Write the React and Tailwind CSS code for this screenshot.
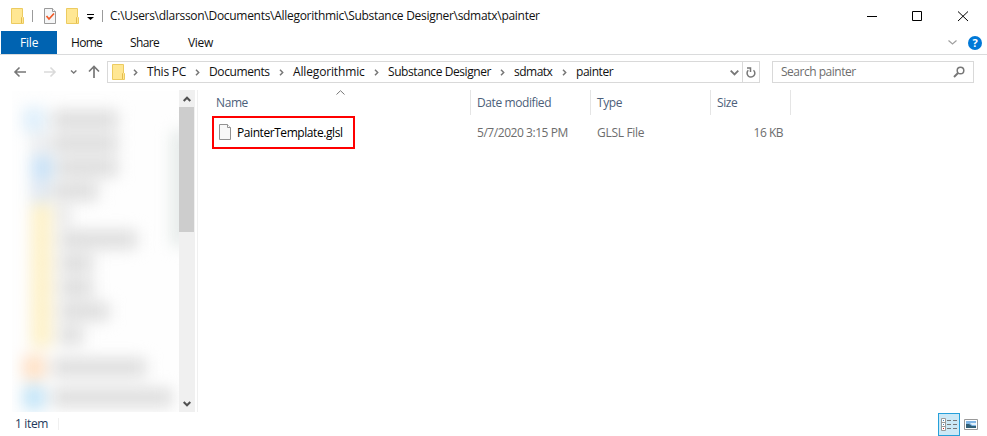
import React from "react";

const Folder = ({ className = "" }) => (
  <svg width="13" height="16" viewBox="0 0 13 16" className={className}>
    <path d="M.5.5h11v8l1 1v6H.5z" fill="#ffe793" stroke="#eccb60" />
    <path d="M10.5 15V9.5l1-1" fill="none" stroke="#e3bb4c" />
  </svg>
);

const Crumb = ({ children, className }) => (
  <>
    <svg width="5" height="7" viewBox="0 0 5 7" className="shrink-0">
      <path d="M1 .7 3.7 3.5 1 6.3" fill="none" stroke="#777" strokeWidth="1.5" />
    </svg>
    <span className={`ml-[9px] shrink-0 ${className}`}>{children}</span>
  </>
);

function TitleBar() {
  return (
    <div className="flex h-[31px] items-center">
      <Folder className="ml-[11px]" />
      <div className="ml-2 h-3 w-px bg-[#9b9b9b]" />
      <svg width="12" height="16" viewBox="0 0 12 16" className="ml-[11px]">
        <path d="M.5.5h8l3 3v12H.5z" fill="#f5f6f7" stroke="#9a9a9a" />
        <path d="M8.5.5v3h3" fill="#fff" stroke="#9a9a9a" />
        <path d="m2.5 8 2.5 3 5-5.5" fill="none" stroke="#f05a28" strokeWidth="1.7" />
      </svg>
      <Folder className="ml-[10px]" />
      <svg width="7" height="6" viewBox="0 0 7 6" className="ml-2 mt-0.5">
        <path d="M0 0h7v1H0zM0 3h7L3.5 6z" fill="#000" />
      </svg>
      <div className="ml-2 h-3 w-px bg-[#9b9b9b]" />
      <span className="ml-[7px] w-[758px] pt-px tracking-[-0.29px]">
        C:\Users\dlarsson\Documents\Allegorithmic\Substance Designer\sdmatx\painter
      </span>
      <svg width="103" height="12" viewBox="0 0 103 12" className="-ml-[1px] shrink-0" fill="none" stroke="#000">
        <path d="M0 6.5h10M45.5 1.5h9v9h-9zM91 1.5l10 9.5M101 1.5 91 11" />
      </svg>
    </div>
  );
}

function Ribbon() {
  return (
    <div className="flex h-6 items-center border-b border-[#dadbdc]">
      <div className="ml-px flex h-[23px] w-14 items-center bg-[#0063b1] pl-[19px] pt-px text-white tracking-[-0.2px]">File</div>
      <span className="ml-[14px] w-[59px] pt-px tracking-[-0.7px]">Home</span>
      <span className="w-[58px] pt-px tracking-[-0.6px]">Share</span>
      <span className="grow pt-px tracking-[-0.3px]">View</span>
      <svg width="9" height="5" viewBox="0 0 9 5" className="mr-[11px]">
        <path d="m.5.5 4 3.5 4-3.5" fill="none" stroke="#a0a0a0" strokeWidth="1.2" />
      </svg>
      <div className="mr-[5px] flex size-[14px] items-center justify-center rounded-full bg-[#0078d7] text-[11px] font-bold text-white">?</div>
    </div>
  );
}

function AddressBar() {
  return (
    <div className="flex h-[35px] items-start pt-[6px]">
      <svg width="106" height="22" viewBox="0 0 106 22" className="mr-px shrink-0" fill="none">
        <path d="M26 11H15M19.5 6.5 15 11l4.5 4.5" stroke="#777" strokeWidth="1.6" />
        <path d="M44 11h11M50.5 6.5 55 11l-4.5 4.5" stroke="#dadada" strokeWidth="1.6" />
        <path d="m71 9.5 2.7 2.5 2.7-2.5" stroke="#777" strokeWidth="1.4" />
        <path d="M94 17V6M89 10.5 94 5.5l5 5" stroke="#777" strokeWidth="1.7" />
      </svg>
      <div className="flex h-[22px] w-[653px] shrink-0 items-center border border-[#d9d9d9]">
        <Folder className="ml-1 mr-2" />
        <div className="flex grow items-center">
          <Crumb className="w-[48px] tracking-[-0.2px]">This PC</Crumb>
          <Crumb className="w-[70px] tracking-[-0.4px]">Documents</Crumb>
          <Crumb className="w-[81px] tracking-[-0.15px]">Allegorithmic</Crumb>
          <Crumb className="w-[112px] tracking-[-0.42px]">Substance Designer</Crumb>
          <Crumb className="w-[48px] tracking-[-0.5px]">sdmatx</Crumb>
          <Crumb className="tracking-[-0.45px]">painter</Crumb>
        </div>
        <svg width="9" height="6" viewBox="0 0 9 6" className="mr-[3px] mt-px shrink-0">
          <path d="m.7.7 3.8 3.8L8.3.7" fill="none" stroke="#777" strokeWidth="1.8" />
        </svg>
        <div className="flex h-full w-[17px] shrink-0 items-center justify-center border-l border-[#d9d9d9]">
          <svg width="10" height="11" viewBox="0 0 10 11" fill="none" stroke="#777" strokeWidth="1.5">
            <path d="M7.5 3.2A3.9 3.9 0 1 1 2.3 3.3M1 1h3.5v4" />
          </svg>
        </div>
      </div>
      <div className="ml-3 flex h-[22px] w-[202px] items-center border border-[#d9d9d9] pl-2 text-[#6d6d6d]">
        <span className="grow tracking-[-0.48px]">Search painter</span>
        <svg width="12" height="12" viewBox="0 0 12 12" className="mr-2" fill="none" stroke="#777" strokeWidth="1.5">
          <circle cx="7.5" cy="4.5" r="3.3" />
          <path d="M5 7 1 11" strokeWidth="2" />
        </svg>
      </div>
    </div>
  );
}

const places = [
  ["ml-3 w-5 bg-[#d3eafa]", "ml-2 w-[66px]"],
  ["ml-5 w-4 bg-[#e6e8ea]", "ml-1 w-[66px]"],
  ["ml-5 w-5 bg-[#b9d9f6]", "ml-1 w-[62px]"],
  ["ml-5 w-4 bg-[#d5dfec]", "ml-1 w-[46px]"],
  ["ml-[20px] w-[19px] bg-[#fdecb6]", "ml-2 w-[10px]"],
  ["ml-[20px] w-[19px] bg-[#fdecb6]", "ml-2 w-[78px]"],
  ["ml-[20px] w-[19px] bg-[#fdecb6]", "ml-2 w-[34px]"],
  ["ml-[20px] w-[19px] bg-[#fdecb6]", "ml-2 w-[34px]"],
  ["ml-[20px] w-[19px] bg-[#fdecb6]", "ml-2 w-[50px]"],
  ["ml-[20px] w-[19px] bg-[#fdecb6]", "ml-2 w-[24px]"],
  ["mt-4 ml-3 w-[20px] bg-[#ffd6b0]", "mt-4 ml-2 w-[94px]"],
  ["mt-7 ml-3 w-[20px] bg-[#afdcf6]", "mt-7 ml-2 w-[120px]"],
];

function Sidebar() {
  return (
    <div className="flex w-[198px] shrink-0 border-r border-[#f0f0f0]">
      <div className="ml-[12px] mt-px w-[167px] overflow-hidden bg-[#fefefe]">
        <div className="flex">
          <div className="w-[160px] shrink-0 pt-4 blur-[8px]">
            {places.map(([icon, label], i) => (
              <div key={i} className="flex h-6 items-center">
                <div className={`h-[23px] shrink-0 opacity-85 ${icon}`} />
                <div className={`h-[17px] shrink-0 bg-[#dadada] ${label}`} />
              </div>
            ))}
          </div>
          <div className="mt-10 h-[115px] w-4 shrink-0 bg-[#e2e8e6] blur-[8px]" />
        </div>
      </div>
      <div className="flex w-4 flex-col items-center bg-[#f0f0f0]">
        <svg width="8" height="17" viewBox="0 0 8 17" className="shrink-0">
          <path d="m.7 11 3.3-3.3L7.3 11" fill="none" stroke="#505050" strokeWidth="2" />
        </svg>
        <div className="mr-px h-[125px] w-[15px] shrink-0 bg-[#cdcdcd]" />
        <svg width="8" height="17" viewBox="0 0 8 17" className="mt-auto shrink-0">
          <path d="m.7 7 3.3 3.3L7.3 7" fill="none" stroke="#505050" strokeWidth="2" />
        </svg>
      </div>
    </div>
  );
}

function FileList() {
  return (
    <div className="grow">
      <div className="flex h-[25px] items-center text-[#4c607a] tracking-[-0.4px]">
        <div className="flex h-full w-[273px] items-center border-r border-[#e5e5e5] pl-[18px]">
          <span className="w-[120px] pt-px">Name</span>
          <svg width="9" height="5" viewBox="0 0 9 5" className="mb-[20px]">
            <path d="M.5 4.5 4.5.7l4 3.8" fill="none" stroke="#777" />
          </svg>
        </div>
        <div className="flex h-full w-[120px] items-center border-r border-[#e5e5e5] pl-[6px] pt-px">Date modified</div>
        <div className="flex h-full w-[120px] items-center border-r border-[#e5e5e5] pl-[6px] pt-px">Type</div>
        <div className="flex h-full w-[80px] items-center border-r border-[#e5e5e5] pl-[6px] pt-px">Size</div>
      </div>
      <div className="mt-px flex h-[33px] items-center text-[#6d6d6d]">
        <div className="ml-[14px] flex h-[33px] w-[143px] shrink-0 items-center border-2 border-[#f00] pl-[5px] text-black">
          <svg width="12" height="16" viewBox="0 0 12 16" className="mb-[2px] mr-[6px] shrink-0">
            <path d="M.5.5h8l3 3v12H.5z" fill="#f8f8f8" stroke="#929292" />
            <path d="M8.5.5v3h3" fill="#fff" stroke="#929292" />
          </svg>
          <span className="tracking-[-0.43px]">PainterTemplate.glsl</span>
        </div>
        <span className="ml-[122px] w-[120px] tracking-[-0.45px]">5/7/2020 3:15 PM</span>
        <span className="w-[100px] tracking-[-0.3px]">GLSL File</span>
        <span className="w-[86px] text-right tracking-[-0.5px]">16 KB</span>
      </div>
    </div>
  );
}

function StatusBar() {
  return (
    <div className="flex h-6 items-center">
      <span className="ml-[15px] w-[43px] text-[#1e395b] tracking-[-0.35px]">1 item</span>
      <div className="h-3 w-px bg-[#f0f0f0]" />
      <div className="ml-auto flex h-[23px] w-[22px] items-center justify-center border border-[#26a0da] bg-[#cce8f6]">
        <svg width="16" height="13" viewBox="0 0 16 13" fill="none" className="shrink-0">
          <path d="M.5.5h4v12h-4zM.5 4.5h4M.5 8.5h4" fill="#fff" stroke="#999" />
          <path d="M6 2.500h4m2 0h4M6 6.500h4m2 0h4M6 10.500h4m2 0h4" stroke="#777" />
          <path d="M2 2h1v1H2zM2 6h1v1H2z" fill="#4b82b8" />
          <path d="M2 10h1v1H2z" fill="#d02020" />
        </svg>
      </div>
      <svg width="14" height="11" viewBox="0 0 14 11" className="ml-1 mr-[9px]">
        <path d="M.5.5h13v10H.5z" fill="#fff" stroke="#999" />
        <path d="M2 2h10v7H2z" fill="#82b7e6" />
        <path d="M2 5h3l3 2h4v2H2z" fill="#315f76" />
        <path d="M6 4h6v2H8z" fill="#e2f1fb" />
      </svg>
    </div>
  );
}

export default function App() {
  return (
    <div className="flex h-[436px] w-[987px] flex-col overflow-hidden whitespace-nowrap bg-white font-['Open_Sans','Noto_Sans',sans-serif] text-[12px] leading-4 text-[#111]">
      <TitleBar />
      <Ribbon />
      <AddressBar />
      <div className="flex h-[322px] shrink-0">
        <Sidebar />
        <FileList />
      </div>
      <StatusBar />
    </div>
  );
}
